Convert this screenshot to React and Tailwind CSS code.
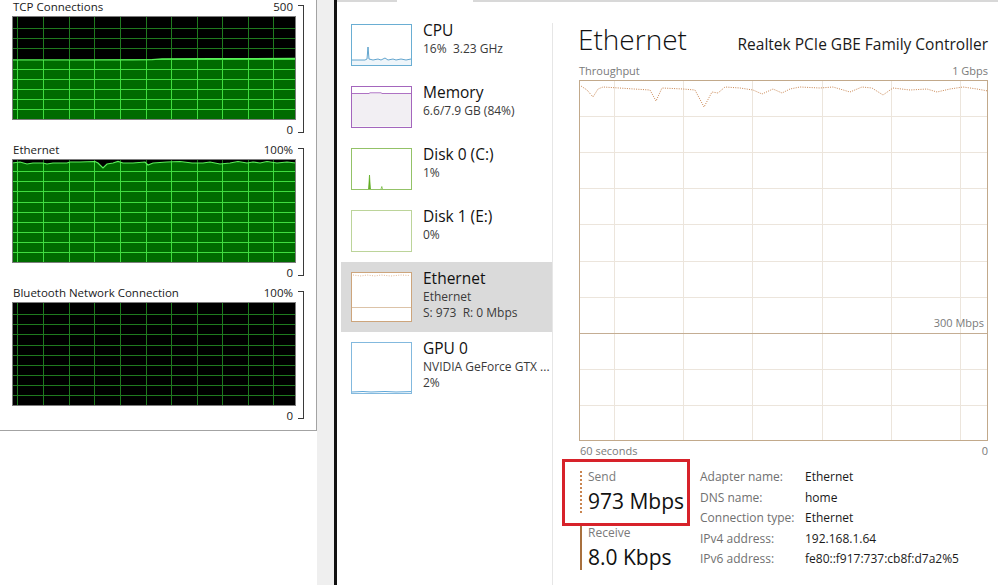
import React from "react";

const VX = [5, 31, 57, 82, 108, 134, 159, 185, 210, 236, 261];
const HY = [12, 22, 32, 43, 53, 63, 73, 83, 93];

const tcpLine = "M0,44 L60,44 L120,43.8 L140,43.6 L150,42.8 L200,42.6 L284,42.4";
const ethLine =
  "M0,4 L8,3 L15,5 L21,4 L31,4 L35,5 L41,4 L55,4 L58,3 L68,3 L83,2.5 L86,4 L91,9 L95,5 L101,4 L106,2.5 L111,4 L121,4 L133,3 L136,6 L141,4 L155,3 L168,2.5 L180,4 L191,4 L198,3 L208,5 L218,4 L226,2.5 L235,4 L241,3 L248,4 L255,2.5 L265,4 L275,3 L284,4";

const sendLine =
  "M2,6 L8,10 L14,17 L19,9 L24,7 L40,8 L55,9 L71,10 L77,21 L83,8 L104,9 L116,10 L125,27 L133,12 L139,13 L146,7 L161,8 L174,10 L183,14 L194,9 L203,13 L211,9 L221,7 L241,8 L254,7 L271,12 L283,7 L293,8 L304,15 L314,8 L331,10 L348,9 L358,12 L371,9 L384,7 L398,9 L409,11";

function GreenGraph({ id, line }) {
  const fill = line ? `${line} L284,104 L0,104 Z` : null;
  const grid = (stroke) => (
    <g stroke={stroke} strokeWidth="1" shapeRendering="crispEdges">
      {VX.map((x) => (
        <line key={"v" + x} x1={x + 0.5} y1="0" x2={x + 0.5} y2="104" />
      ))}
      {HY.map((y) => (
        <line key={"h" + y} x1="0" y1={y + 0.5} x2="284" y2={y + 0.5} />
      ))}
    </g>
  );
  return (
    <svg width="284" height="104" viewBox="0 0 284 104" className="block">
      <rect width="284" height="104" fill="#000" />
      {fill && <path d={fill} fill="#006b00" />}
      {grid("#1f7a1f")}
      {fill && (
        <>
          <defs>
            <clipPath id={id}>
              <path d={fill} />
            </clipPath>
          </defs>
          <g clipPath={`url(#${id})`}>{grid("#3fdc3f")}</g>
        </>
      )}
      {line && <path d={line} fill="none" stroke="#5af05a" strokeWidth="1.2" />}
      <rect x="0.5" y="0.5" width="283" height="103" fill="none" stroke="#7d7d7d" />
    </svg>
  );
}

function NetBlock({ label, max, children }) {
  return (
    <div className="flex h-[143px] shrink-0">
      <div className="w-[296px] pl-[12px]">
        <div className="flex h-[16px] items-center justify-between pb-[2px] pl-[1px] pr-[3px] text-[11.5px] leading-none text-[#1a1a1a]">
          <span>{label}</span>
          <span>{max}</span>
        </div>
        {children}
        <div className="flex h-[20px] items-center justify-end pr-[3px] text-[11.5px] leading-none text-[#1a1a1a]">
          0
        </div>
      </div>
      <div className="ml-[2px] mt-[5px] h-[128px] w-[6px] border-y border-r border-[#3a3a3a]" />
    </div>
  );
}

function Thumb({ h = 42, border, children }) {
  return (
    <svg width="61" height={h} viewBox={`0 0 61 ${h}`} className="block shrink-0">
      <rect x="0.5" y="0.5" width="60" height={h - 1} fill="#fff" />
      {children}
      <rect x="0.5" y="0.5" width="60" height={h - 1} fill="none" stroke={border} />
    </svg>
  );
}

const items = [
  {
    title: "CPU",
    lines: ["16%  3.23 GHz"],
    thumb: (
      <Thumb border="#6aaed3">
        <path
          d="M1,41 L1,36 L14,36 L16,35 L17,23 L18,35 L22,36 L27,35 L30,36 L34,34 L37,36 L42,35 L45,36 L50,35 L55,36 L60,35 L60,41 Z"
          fill="#eef5fa"
        />
        <path
          d="M1,36 L14,36 L16,35 L17,23 L18,35 L22,36 L27,35 L30,36 L34,34 L37,36 L42,35 L45,36 L50,35 L55,36 L60,35"
          fill="none"
          stroke="#3d8fc2"
          strokeWidth="0.8"
        />
      </Thumb>
    ),
  },
  {
    title: "Memory",
    lines: ["6.6/7.9 GB (84%)"],
    thumb: (
      <Thumb border="#a466bd">
        <rect x="1" y="7.5" width="59" height="33" fill="#f2eff3" />
        <path
          d="M1,7.5 L18,7.5 L19,6.8 L30,6.8 L31,7.5 L60,7.5"
          fill="none"
          stroke="#9b4fb5"
          strokeWidth="0.8"
        />
      </Thumb>
    ),
  },
  {
    title: "Disk 0 (C:)",
    lines: ["1%"],
    thumb: (
      <Thumb border="#93c267">
        <path d="M17.5,41 L18.5,27 L19.5,41 Z" fill="#6fb030" stroke="#4da60c" strokeWidth="0.6" />
        <path d="M30,41 L30.8,38.5 L31.5,41" fill="none" stroke="#4da60c" strokeWidth="0.6" />
      </Thumb>
    ),
  },
  {
    title: "Disk 1 (E:)",
    lines: ["0%"],
    thumb: <Thumb border="#bcd49a" />,
  },
  {
    title: "Ethernet",
    lines: ["Ethernet", "S: 973  R: 0 Mbps"],
    selected: true,
    thumb: (
      <Thumb h={50} border="#cda57c">
        <line x1="1" y1="35.5" x2="60" y2="35.5" stroke="#dcc3a8" strokeWidth="1" />
        <path
          d="M2,3 L10,4 L16,3 L24,4 L30,3 L40,4 L50,3 L59,3.5"
          fill="none"
          stroke="#dba57a"
          strokeWidth="0.8"
          strokeDasharray="1 1.4"
        />
      </Thumb>
    ),
  },
  {
    title: "GPU 0",
    lines: ["NVIDIA GeForce GTX ...", "2%"],
    thumb: (
      <Thumb h={52} border="#83b9de">
        <path d="M1,50 L12,49.5 L20,50 L34,49.5 L45,50 L60,49.6" fill="none" stroke="#5fa7d8" strokeWidth="1" />
      </Thumb>
    ),
  },
];

function SideItem({ item }) {
  return (
    <div
      className={`ml-[4px] flex w-[211px] items-start gap-[11px] px-[10px] py-[10px] ${
        item.selected ? "bg-[#dadada]" : ""
      }`}
    >
      {item.thumb}
      <div className="-mt-[4px] min-w-0 whitespace-nowrap">
        <div className="text-[15.5px] leading-[21px] text-[#111]">{item.title}</div>
        {item.lines.map((l) => (
          <div key={l} className="whitespace-pre text-[12px] leading-[16px] text-[#3a3a3a]">
            {l}
          </div>
        ))}
      </div>
    </div>
  );
}

function ThroughputGraph() {
  const vxs = [35, 104, 173, 243, 312, 381];
  return (
    <div className="relative h-[361px] w-[409px]">
      <svg width="409" height="361" viewBox="0 0 409 361" className="block">
        <rect width="409" height="361" fill="#fff" />
        <g stroke="#ece5dc" strokeWidth="1" shapeRendering="crispEdges">
          {vxs.map((x) => (
            <line key={x} x1={x + 0.5} y1="0" x2={x + 0.5} y2="361" />
          ))}
          {[1, 2, 3, 4, 5, 6, 8, 9].map((k) => (
            <line key={k} x1="0" y1={Math.round(k * 36.1) + 0.5} x2="409" y2={Math.round(k * 36.1) + 0.5} />
          ))}
        </g>
        <line x1="0" y1="253.5" x2="409" y2="253.5" stroke="#c4ad93" strokeWidth="1" shapeRendering="crispEdges" />
        <path d={sendLine} fill="none" stroke="#c98550" strokeWidth="1" strokeDasharray="1 1.3" />
        <rect x="0.5" y="0.5" width="408" height="360" fill="none" stroke="#c2a98b" shapeRendering="crispEdges" />
      </svg>
      <div className="absolute right-[4px] top-[237px] text-[11px] leading-none text-[#7a7a7a]">300 Mbps</div>
    </div>
  );
}

const details = [
  ["Adapter name:", "Ethernet"],
  ["DNS name:", "home"],
  ["Connection type:", "Ethernet"],
  ["IPv4 address:", "192.168.1.64"],
  ["IPv6 address:", "fe80::f917:737:cb8f:d7a2%5"],
];

export default function App() {
  return (
    <div className="flex h-[585px] w-[998px] overflow-hidden bg-white font-['Open_Sans','Noto_Sans',sans-serif] text-[#111]">
      {/* left: perf monitor graphs */}
      <div className="flex h-[431px] w-[317px] shrink-0 flex-col border-b border-r border-[#a3a3a3] bg-white">
        <NetBlock label="TCP Connections" max="500">
          <GreenGraph id="tcp" line={tcpLine} />
        </NetBlock>
        <NetBlock label="Ethernet" max="100%">
          <GreenGraph id="eth" line={ethLine} />
        </NetBlock>
        <NetBlock label="Bluetooth Network Connection" max="100%">
          <GreenGraph id="bt" />
        </NetBlock>
      </div>
      <div className="h-full w-[17px] shrink-0 bg-[#efefef]" />
      <div className="h-full w-[3px] shrink-0 bg-[#111]" />

      {/* task manager */}
      <div className="flex h-full flex-1 flex-col">
        <div className="flex h-[2px] shrink-0">
          <div className="w-[60px] bg-[#d8d8d8]" />
          <div className="w-[76px]" />
          <div className="flex-1 bg-[#d8d8d8]" />
        </div>
        <div className="flex flex-1">
          <div className="w-[215px] shrink-0 pt-[12px]">
            {items.map((it) => (
              <SideItem key={it.title} item={it} />
            ))}
          </div>
          <div className="mt-[21px] w-px shrink-0 bg-[#e6e6e6]" />

          <div className="flex flex-1 flex-col pl-[9px] pr-[10px] pt-[23px]">
            <div className="flex items-baseline justify-between pl-[16px]">
              <span className="text-[28px] font-light leading-none text-[#111]">Ethernet</span>
              <span className="text-[15.5px] leading-none text-[#1a1a1a]">Realtek PCIe GBE Family Controller</span>
            </div>
            <div className="mt-[12px] flex justify-between pl-[17px] text-[11px] leading-none text-[#7a7a7a]">
              <span>Throughput</span>
              <span>1 Gbps</span>
            </div>
            <div className="mt-[4px] pl-[17px]">
              <ThroughputGraph />
            </div>
            <div className="mt-[4px] flex justify-between pl-[18px] text-[11px] leading-none text-[#7a7a7a]">
              <span>60 seconds</span>
              <span>0</span>
            </div>

            <div className="mt-[3px] flex">
              <div className="flex w-[128px] shrink-0 flex-col">
                <div className="h-[67px] border-[3px] border-[#d7222a] pl-[15px] pt-[8px]">
                  <div className="h-[42px] border-l-2 border-dotted border-[#c98550] pl-[6px]">
                    <div className="mt-[1px] text-[12px] leading-none text-[#7a7a7a]">Send</div>
                    <div className="mt-[8px] whitespace-nowrap text-[21px] leading-none text-[#111]">973 Mbps</div>
                  </div>
                </div>
                <div className="ml-[18px] h-[44px] border-l-2 border-[#a8703e] pl-[6px]">
                  <div className="mt-[1px] text-[12px] leading-none text-[#7a7a7a]">Receive</div>
                  <div className="mt-[8px] whitespace-nowrap text-[21px] leading-none text-[#111]">8.0 Kbps</div>
                </div>
              </div>
              <div className="ml-[10px] mt-[8px] grid grid-cols-[105px_auto] text-[12px] leading-[20.5px]">
                {details.map(([k, v]) => (
                  <React.Fragment key={k}>
                    <span className="text-[#707070]">{k}</span>
                    <span className="text-[#1a1a1a]">{v}</span>
                  </React.Fragment>
                ))}
              </div>
            </div>
          </div>
        </div>
      </div>
    </div>
  );
}
